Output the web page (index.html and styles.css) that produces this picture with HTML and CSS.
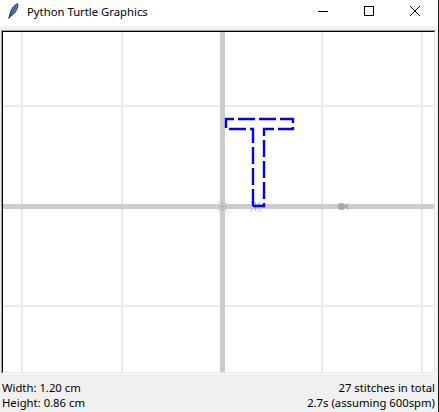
FILE: index.html
```html
<!DOCTYPE html>
<html>
<head>
<meta charset="utf-8">
<link rel="stylesheet" href="styles.css">
</head>
<body>
<div class="window">
  <div class="titlebar">
    <svg class="app-icon" width="12" height="16" viewBox="0 0 12 16">
      <path d="M2.2 15.2 C2.6 11 4 6.5 6.5 3.5 C8 1.8 9.8 1 10.8 0.8 C11.2 2.5 10.5 5 9.2 7.5 C7.8 10.2 5.5 12.3 3.4 13.3 Z" fill="#5c86c4" stroke="#1b2a44" stroke-width="0.9" stroke-linejoin="round"/>
      <path d="M1.2 15.6 L8.8 3.6" stroke="#1b2a44" stroke-width="0.8" fill="none"/>
    </svg>
    <span class="title">Python Turtle Graphics</span>
    <div class="controls">
      <svg class="ctl" width="46" height="26" viewBox="0 0 46 26"><path d="M18 11.5 H28" stroke="#000" stroke-width="1"/></svg>
      <svg class="ctl" width="46" height="26" viewBox="0 0 46 26"><rect x="18.5" y="6.5" width="9" height="9" fill="none" stroke="#000" stroke-width="1"/></svg>
      <svg class="ctl" width="46" height="26" viewBox="0 0 46 26"><path d="M18 6 L28 16 M28 6 L18 16" stroke="#000" stroke-width="1"/></svg>
    </div>
  </div>
  <div class="frame-outer">
    <div class="frame-inner">
      <svg class="canvas" width="431" height="340" viewBox="0 0 431 340">
        <g transform="translate(-3,-32)">
          <g fill="#ebebeb">
            <rect x="21" y="32" width="2" height="340"/>
            <rect x="121" y="32" width="2" height="340"/>
            <rect x="321" y="32" width="2" height="340"/>
            <rect x="421" y="32" width="2" height="340"/>
            <rect x="3" y="105" width="431" height="2"/>
            <rect x="3" y="305" width="431" height="2"/>
          </g>
          <g fill="#cccccc">
            <rect x="220" y="32" width="5" height="340"/>
            <rect x="3" y="204" width="431" height="5"/>
          </g>
          <g stroke="#bdbdbd" stroke-width="1">
            <path d="M217.5 201.5 L227.5 211.5 M227.5 201.5 L217.5 211.5"/>
            <path d="M250.5 201.5 L260.5 211.5 M260.5 201.5 L250.5 211.5"/>
          </g>
          <g stroke="#b2b2b2" stroke-width="1">
            <path d="M222.5 202 V211 M218 206.5 H227"/>
            <path d="M255.5 202 V211 M251 206.5 H260"/>
          </g>
          <path d="M253 206 L253 129 L226 129 L226 119 L293 119 L293 129 L264 129 L264 206 L253 206" fill="none" stroke="#0000ff" stroke-width="2.4" stroke-dasharray="17 4" stroke-linejoin="miter"/>
          <g fill="#aaaaaa">
            <ellipse cx="341.5" cy="206.5" rx="3.8" ry="3.4"/>
            <path d="M344 206.5 L349 202.5 L347.5 206.5 L349 210.5 Z"/>
          </g>
        </g>
      </svg>
    </div>
  </div>
  <div class="status">
    <div class="status-col">
      <div>Width: 1.20 cm</div>
      <div>Height: 0.86 cm</div>
    </div>
    <div class="status-col right">
      <div>27 stitches in total</div>
      <div>2.7s (assuming 600spm)</div>
    </div>
  </div>
</div>
</body>
</html>
```

FILE: styles.css
```css
html, body {
  margin: 0;
  padding: 0;
  background: #f0f0f0;
}
.window {
  width: 438px;
  height: 412px;
  border-right: 1px solid #1a1a1a;
  background: #f0f0f0;
  font-family: "Noto Sans", "Open Sans", sans-serif;
  font-size: 11.3px;
  color: #000;
  overflow: hidden;
}
.titlebar {
  height: 26px;
  background: #fff;
  display: flex;
  align-items: flex-start;
  margin-bottom: 4px;
}
.app-icon {
  display: block;
  margin: 3px 0 0 7px;
}
.title {
  margin: 4px 0 0 8px;
  line-height: 15px;
  white-space: nowrap;
}
.controls {
  margin-left: auto;
  display: flex;
}
.ctl {
  display: block;
}
.frame-outer {
  margin-left: 1px;
  width: 433px;
  border-top: 1px solid #a0a0a0;
  border-left: 1px solid #a0a0a0;
  border-right: 1px solid #ffffff;
  border-bottom: 1px solid #ffffff;
}
.frame-inner {
  border-top: 1px solid #000;
  border-left: 1px solid #000;
  border-right: 1px solid #e3e3e3;
  border-bottom: 1px solid #e3e3e3;
  background: #fff;
}
.canvas {
  display: block;
}
.status {
  display: flex;
  justify-content: space-between;
  padding: 6px 3px 0 2px;
  line-height: 15px;
  white-space: nowrap;
}
.status-col.right {
  text-align: right;
}
```
